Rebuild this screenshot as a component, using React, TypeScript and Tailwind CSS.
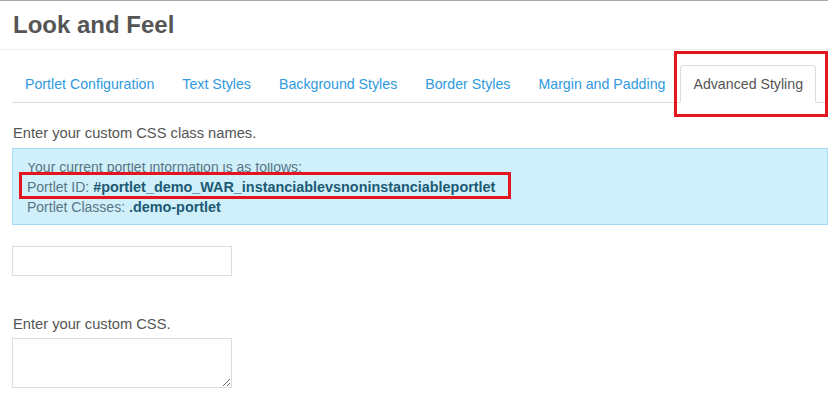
const tabs = [
  'Portlet Configuration',
  'Text Styles',
  'Background Styles',
  'Border Styles',
  'Margin and Padding',
  'Advanced Styling',
];

export default function App() {
  return (
    <div className="min-h-[393px] w-[828px] overflow-hidden bg-white font-['Liberation_Sans',Arial,sans-serif] text-[14px] leading-5 text-[#555]">
      <div className="h-px bg-[#a9a9a9]" />

      <h1 className="ml-[13px] mt-[9px] mb-[9px] text-[24px] font-bold leading-[30px] text-[#555]">Look and Feel</h1>
      <div className="h-px bg-[#eeeeee]" />

      <ul className="ml-3 mt-[15px] flex border-b border-[#ddd] text-[14.2px]">
        {tabs.map((tab) => {
          const active = tab === 'Advanced Styling';
          return (
            <li key={tab} className="relative -mb-px mr-[2px]">
              <a
                className={
                  active
                    ? 'block rounded-t border border-[#ddd] border-b-transparent bg-white px-3 py-2 leading-5 text-[#555]'
                    : 'block border border-transparent px-3 py-2 leading-5 text-[#2f9ae0]'
                }
              >
                {tab}
              </a>
              {active ? (
                <span className="pointer-events-none absolute -left-[6px] -top-[14px] -right-[12px] -bottom-[14px] border-[3px] border-[#e3161e]" />
              ) : null}
            </li>
          );
        })}
      </ul>

      <div className="ml-[13px] mt-5 text-[14.7px]">Enter your custom CSS class names.</div>

      <div className="ml-3 mt-[5px] border border-[#a3dcf2] bg-[#cff0fa] pl-[14px] pt-2 pb-[7px] text-[#587585]">
        <div className="pt-[6px]">
          <div className="h-[14px] overflow-hidden">
            <div className="-mt-[6px]">Your current portlet information is as follows:</div>
          </div>
        </div>
        <div>
          <span className="relative inline-block">
            Portlet ID: <strong className="text-[14.4px] font-bold text-[#1d5a74]">#portlet_demo_WAR_instanciablevsnoninstanciableportlet</strong>
            <span className="pointer-events-none absolute -left-[8px] -top-[5px] -right-[16px] -bottom-[2px] border-[3px] border-[#e3161e]" />
          </span>
        </div>
        <div>
          Portlet Classes: <strong className="text-[14.4px] font-bold text-[#1d5a74]">.demo-portlet</strong>
        </div>
      </div>

      <input type="text" className="ml-3 mt-[21px] block h-[30px] w-[220px] border border-[#ddd] bg-white outline-none" />

      <div className="ml-[13px] mt-[38px] text-[14.7px]">Enter your custom CSS.</div>

      <textarea className="ml-3 mt-1 block h-[50px] w-[220px] border border-[#ddd] bg-white outline-none" />
    </div>
  );
}
